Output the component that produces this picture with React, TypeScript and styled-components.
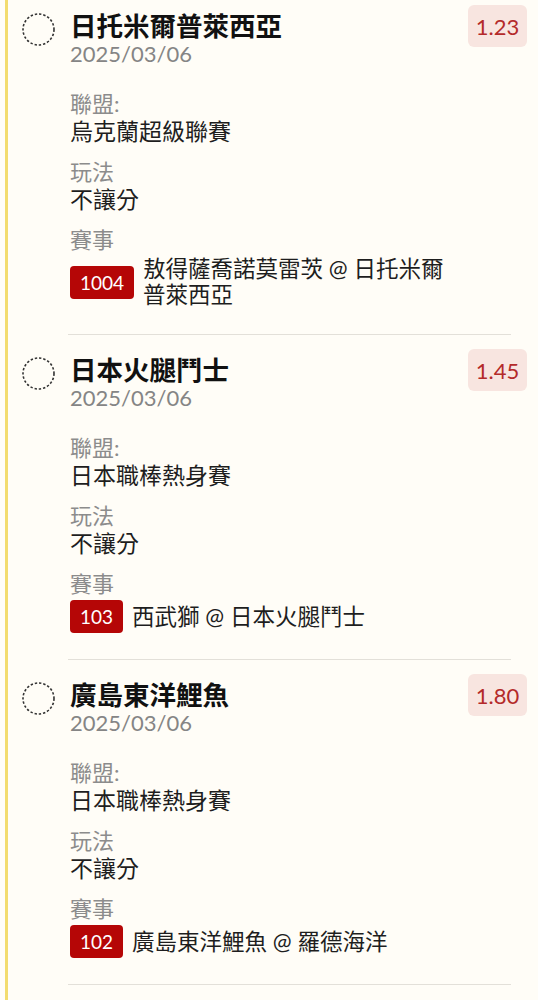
import React from "react";
import styled, { createGlobalStyle } from "styled-components";

const Global = createGlobalStyle`
  html, body { margin: 0; padding: 0; background: #fffdf7; }
  body { font-family: Lato, "Noto Sans CJK TC", sans-serif; -webkit-font-smoothing: antialiased; }
`;

const Page = styled.div`
  margin-left: 5px;
  border-left: 3px solid #f3dc6e;
  min-height: 1000px;
  background: #fffdf7;
`;

const Item = styled.div`
  display: flex;
  align-items: flex-start;
  padding: 14px 11px 26px 14px;
  &:first-child { padding-top: 5px; }
`;

const CircleWrap = styled.div`
  flex-shrink: 0;
  width: 33px;
  height: 33px;
  margin-top: 8px;
  display: flex;
`;

const Body = styled.div`
  flex: 1;
  min-width: 0;
  margin-left: 15px;
  padding-top: 6px;
`;

const Title = styled.div`
  font-family: Lato, "Noto Sans CJK TC", sans-serif;
  font-weight: 700;
  font-size: 26.5px;
  line-height: 30px;
  color: #111;
  white-space: nowrap;
`;

const DateText = styled.div`
  font-size: 22px;
  line-height: 26px;
  color: #858585;
`;

const Fields = styled.div`
  margin-top: 24px;
  display: flex;
  flex-direction: column;
  gap: 14px;
`;

const Label = styled.div`
  font-size: 22px;
  line-height: 26px;
  color: #8c8c8c;
`;

const Value = styled.div`
  font-size: 23px;
  line-height: 28px;
  color: #1e1e1e;
`;

const MatchRow = styled.div`
  margin-top: 3px;
  display: flex;
  align-items: center;
  gap: 9px;
`;

const Code = styled.span`
  flex-shrink: 0;
  height: 33px;
  padding: 0 10px;
  border-radius: 4px;
  background: #b50606;
  color: #fff;
  font-family: Lato, sans-serif;
  font-size: 19px;
  display: flex;
  align-items: center;
  justify-content: center;
`;

const MatchText = styled.span`
  font-size: 22.5px;
  line-height: 26px;
  color: #1e1e1e;
`;

const Odds = styled.div`
  flex-shrink: 0;
  margin-left: 14px;
  width: 59px;
  height: 42px;
  border-radius: 6px;
  background: #f8e5e0;
  color: #b42a2a;
  font-family: Lato, sans-serif;
  font-size: 22px;
  display: flex;
  align-items: center;
  justify-content: center;
`;

const Divider = styled.div`
  height: 1px;
  background: #e3e0d9;
  margin: 0 27px 0 60px;
`;

const Circle = () => (
  <svg width="33" height="33" viewBox="0 0 33 33">
    <circle cx="16.5" cy="16.5" r="15.5" fill="none" stroke="#333" strokeWidth="1.6" strokeDasharray="2.4 1.9" />
  </svg>
);

type Bet = {
  team: string;
  date: string;
  league: string;
  play: string;
  code: string;
  match: string;
  odds: string;
};

const bets: Bet[] = [
  { team: "日托米爾普萊西亞", date: "2025/03/06", league: "烏克蘭超級聯賽", play: "不讓分", code: "1004", match: "敖得薩喬諾莫雷茨 @ 日托米爾普萊西亞", odds: "1.23" },
  { team: "日本火腿鬥士", date: "2025/03/06", league: "日本職棒熱身賽", play: "不讓分", code: "103", match: "西武獅 @ 日本火腿鬥士", odds: "1.45" },
  { team: "廣島東洋鯉魚", date: "2025/03/06", league: "日本職棒熱身賽", play: "不讓分", code: "102", match: "廣島東洋鯉魚 @ 羅德海洋", odds: "1.80" },
];

export default function App() {
  return (
    <>
      <Global />
      <Page>
        {bets.map((b, i) => (
          <React.Fragment key={i}>
            <Item>
              <CircleWrap><Circle /></CircleWrap>
              <Body>
                <Title>{b.team}</Title>
                <DateText>{b.date}</DateText>
                <Fields>
                  <div>
                    <Label>聯盟:</Label>
                    <Value>{b.league}</Value>
                  </div>
                  <div>
                    <Label>玩法</Label>
                    <Value>{b.play}</Value>
                  </div>
                  <div>
                    <Label>賽事</Label>
                    <MatchRow>
                      <Code>{b.code}</Code>
                      <MatchText>{b.match}</MatchText>
                    </MatchRow>
                  </div>
                </Fields>
              </Body>
              <Odds>{b.odds}</Odds>
            </Item>
            <Divider />
          </React.Fragment>
        ))}
      </Page>
    </>
  );
}
